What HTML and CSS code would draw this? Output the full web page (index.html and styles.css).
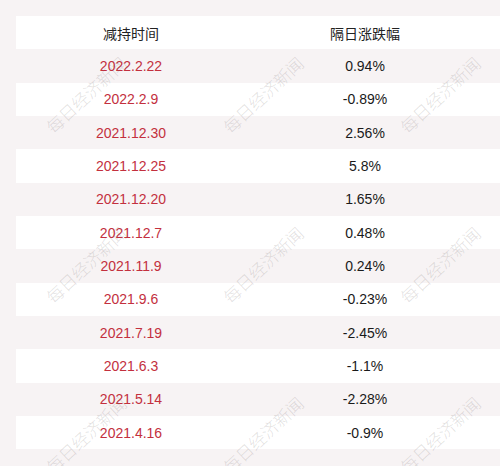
FILE: index.html
```html
<!DOCTYPE html>
<html lang="zh-CN">
<head>
<meta charset="utf-8">
<title>减持时间 隔日涨跌幅</title>
<link rel="stylesheet" href="styles.css">
</head>
<body>
<div class="page">
  <div class="table">
    <div class="row head"><div class="cell">减持时间</div><div class="cell">隔日涨跌幅</div></div>
    <div class="row"><div class="cell date">2022.2.22</div><div class="cell">0.94%</div></div>
    <div class="row"><div class="cell date">2022.2.9</div><div class="cell">-0.89%</div></div>
    <div class="row"><div class="cell date">2021.12.30</div><div class="cell">2.56%</div></div>
    <div class="row"><div class="cell date">2021.12.25</div><div class="cell">5.8%</div></div>
    <div class="row"><div class="cell date">2021.12.20</div><div class="cell">1.65%</div></div>
    <div class="row"><div class="cell date">2021.12.7</div><div class="cell">0.48%</div></div>
    <div class="row"><div class="cell date">2021.11.9</div><div class="cell">0.24%</div></div>
    <div class="row"><div class="cell date">2021.9.6</div><div class="cell">-0.23%</div></div>
    <div class="row"><div class="cell date">2021.7.19</div><div class="cell">-2.45%</div></div>
    <div class="row"><div class="cell date">2021.6.3</div><div class="cell">-1.1%</div></div>
    <div class="row"><div class="cell date">2021.5.14</div><div class="cell">-2.28%</div></div>
    <div class="row"><div class="cell date">2021.4.16</div><div class="cell">-0.9%</div></div>
  </div>
  <div class="watermarks" aria-hidden="true">
    <span>每日经济新闻</span><span>每日经济新闻</span><span>每日经济新闻</span>
    <span>每日经济新闻</span><span>每日经济新闻</span><span>每日经济新闻</span>
    <span>每日经济新闻</span><span>每日经济新闻</span><span>每日经济新闻</span>
  </div>
</div>
</body>
</html>
```
FILE: styles.css
```css
html, body {
  margin: 0;
  padding: 0;
  background: #f7f3f4;
}
.page {
  position: relative;
  width: 500px;
  height: 466px;
  overflow: hidden;
  font-family: "Liberation Sans", "Noto Sans CJK SC", sans-serif;
  font-size: 14px;
  color: #1a1a1a;
}
.table {
  padding: 16px 0 0 16px;
  display: flex;
  flex-direction: column;
}
.row {
  display: grid;
  grid-template-columns: 230px 238px;
  height: 33.33px;
  align-items: center;
}
.row:nth-child(odd) {
  background: #ffffff;
}
.cell {
  text-align: center;
  line-height: 16px;
}
.head .cell {
  font-family: "Noto Sans CJK SC", sans-serif;
  color: #222222;
}
.date {
  color: #c3303e;
}
.watermarks {
  position: absolute;
  left: -3px;
  top: 9px;
  display: grid;
  grid-template-columns: repeat(3, 177px);
  grid-template-rows: repeat(3, 170px);
  pointer-events: none;
}
.watermarks span {
  display: flex;
  align-items: center;
  justify-content: center;
  font-family: "Noto Sans CJK SC", sans-serif;
  font-weight: 300;
  font-size: 17px;
  color: rgba(110, 100, 100, 0.2);
  transform: rotate(-43deg);
  white-space: nowrap;
}
```
